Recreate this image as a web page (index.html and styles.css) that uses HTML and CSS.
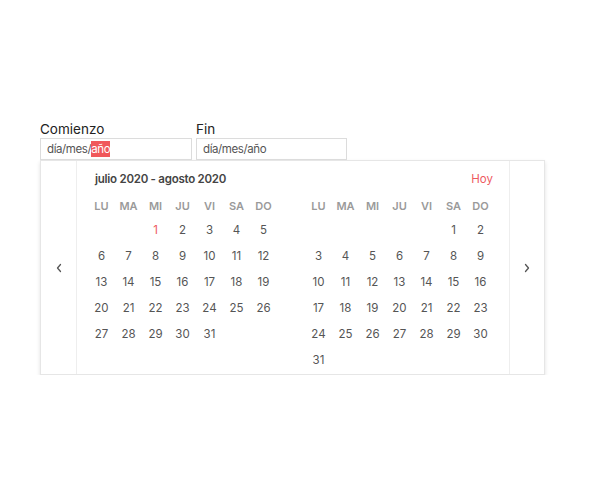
FILE: index.html
```html
<!DOCTYPE html>
<html lang="es">
<head>
<meta charset="utf-8">
<link rel="stylesheet" href="styles.css">
</head>
<body>
<div class="picker">
  <div class="fields">
    <div class="field">
      <div class="label">Comienzo</div>
      <div class="input"><span>día/mes/</span><span class="sel">año</span></div>
    </div>
    <div class="field">
      <div class="label">Fin</div>
      <div class="input"><span>día/mes/año</span></div>
    </div>
  </div>
  <div class="popup">
    <div class="nav nav-left">
      <svg width="8" height="10" viewBox="0 0 8 10"><path d="M5.5 1.5 L2.5 5 L5.5 8.5" fill="none" stroke="#555" stroke-width="1.3" stroke-linecap="round" stroke-linejoin="round"/></svg>
    </div>
    <div class="content">
      <div class="header">
        <span class="title">julio 2020 - agosto 2020</span>
        <span class="today">Hoy</span>
      </div>
      <div class="months">
        <div class="month">
          <div class="wd">LU</div><div class="wd">MA</div><div class="wd">MI</div><div class="wd">JU</div><div class="wd">VI</div><div class="wd">SA</div><div class="wd">DO</div>
          <div></div><div></div><div class="d red">1</div><div class="d">2</div><div class="d">3</div><div class="d">4</div><div class="d">5</div>
          <div class="d">6</div><div class="d">7</div><div class="d">8</div><div class="d">9</div><div class="d">10</div><div class="d">11</div><div class="d">12</div>
          <div class="d">13</div><div class="d">14</div><div class="d">15</div><div class="d">16</div><div class="d">17</div><div class="d">18</div><div class="d">19</div>
          <div class="d">20</div><div class="d">21</div><div class="d">22</div><div class="d">23</div><div class="d">24</div><div class="d">25</div><div class="d">26</div>
          <div class="d">27</div><div class="d">28</div><div class="d">29</div><div class="d">30</div><div class="d">31</div>
        </div>
        <div class="month">
          <div class="wd">LU</div><div class="wd">MA</div><div class="wd">MI</div><div class="wd">JU</div><div class="wd">VI</div><div class="wd">SA</div><div class="wd">DO</div>
          <div></div><div></div><div></div><div></div><div></div><div class="d">1</div><div class="d">2</div>
          <div class="d">3</div><div class="d">4</div><div class="d">5</div><div class="d">6</div><div class="d">7</div><div class="d">8</div><div class="d">9</div>
          <div class="d">10</div><div class="d">11</div><div class="d">12</div><div class="d">13</div><div class="d">14</div><div class="d">15</div><div class="d">16</div>
          <div class="d">17</div><div class="d">18</div><div class="d">19</div><div class="d">20</div><div class="d">21</div><div class="d">22</div><div class="d">23</div>
          <div class="d">24</div><div class="d">25</div><div class="d">26</div><div class="d">27</div><div class="d">28</div><div class="d">29</div><div class="d">30</div>
          <div class="d">31</div>
        </div>
      </div>
    </div>
    <div class="nav nav-right">
      <svg width="8" height="10" viewBox="0 0 8 10"><path d="M2.5 1.5 L5.5 5 L2.5 8.5" fill="none" stroke="#555" stroke-width="1.3" stroke-linecap="round" stroke-linejoin="round"/></svg>
    </div>
  </div>
</div>
</body>
</html>
```
FILE: styles.css
```css
html, body {
  margin: 0;
  padding: 0;
  background: #fff;
}
body {
  font-family: Inter, "Noto Sans", "Liberation Sans", sans-serif;
  color: #333;
}
.picker {
  padding: 121px 0 0 40px;
  width: 505px;
}
.fields {
  display: flex;
  gap: 4px;
}
.field {
  display: flex;
  flex-direction: column;
}
.label {
  font-size: 13.5px;
  line-height: 17px;
  color: #222;
}
.input {
  box-sizing: border-box;
  width: 152px;
  height: 22px;
  border: 1px solid #dcdcdc;
  padding: 0 6px;
  display: flex;
  align-items: center;
  font-size: 11.5px;
  letter-spacing: -0.4px;
  color: #555;
}
.field:last-child .input {
  width: 151px;
}
.sel {
  background: #f0585b;
  color: #fff;
  padding: 1px 0;
}
.popup {
  box-sizing: border-box;
  width: 505px;
  height: 215px;
  border: 1px solid #e6e6e6;
  box-shadow: 0 2px 4px rgba(0, 0, 0, 0.12);
  display: flex;
  background: #fff;
}
.nav {
  display: flex;
  align-items: center;
  justify-content: center;
}
.nav-left {
  width: 35px;
  border-right: 1px solid #eee;
}
.nav-right {
  width: 34px;
  border-left: 1px solid #eee;
}
.content {
  flex: 1;
  padding: 8px 15px 0 11px;
}
.header {
  height: 20px;
  display: flex;
  align-items: center;
  justify-content: space-between;
  padding: 0 1px 0 7px;
}
.title {
  font-size: 11.5px;
  font-weight: 600;
  letter-spacing: -0.25px;
  color: #444;
}
.today {
  font-size: 11.5px;
  color: #ee5a5f;
}
.months {
  display: flex;
  justify-content: space-between;
  margin-top: 6px;
}
.month {
  display: grid;
  grid-template-columns: repeat(7, 27px);
  grid-template-rows: 22px;
  grid-auto-rows: 26px;
}
.wd {
  display: flex;
  align-items: center;
  justify-content: center;
  font-size: 11px;
  font-weight: 600;
  color: #9a9a9a;
}
.d {
  display: flex;
  align-items: center;
  justify-content: center;
  font-size: 11.5px;
  color: #555;
}
.d.red {
  color: #ee5a5f;
}
```
